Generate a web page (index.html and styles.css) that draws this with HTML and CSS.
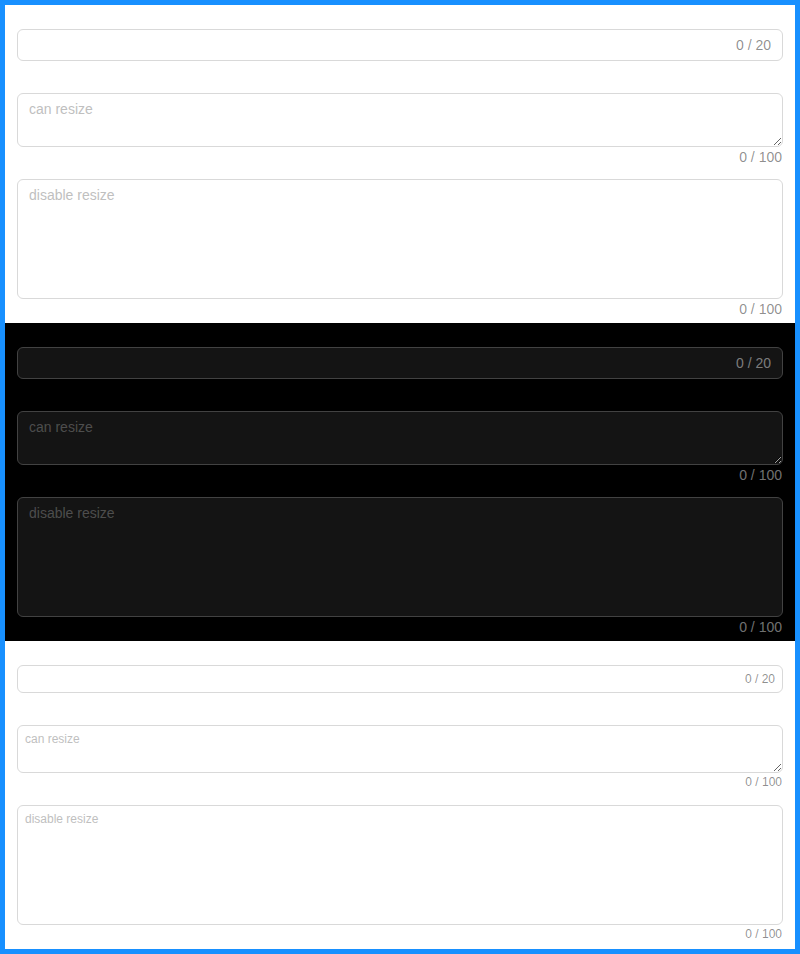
FILE: index.html
```html
<!DOCTYPE html>
<html>
<head>
<meta charset="utf-8">
<title>Input count</title>
<link rel="stylesheet" href="styles.css">
</head>
<body>
<div class="frame">
  <section class="panel light">
    <div class="field">
      <div class="affix">
        <span class="affix-box"></span>
        <span class="suffix">0 / 20</span>
      </div>
    </div>
    <div class="field">
      <textarea class="area area-resize" placeholder="can resize"></textarea>
      <span class="count">0 / 100</span>
    </div>
    <div class="field">
      <textarea class="area area-tall" placeholder="disable resize"></textarea>
      <span class="count">0 / 100</span>
    </div>
  </section>
  <section class="panel dark">
    <div class="field">
      <div class="affix">
        <span class="affix-box"></span>
        <span class="suffix">0 / 20</span>
      </div>
    </div>
    <div class="field">
      <textarea class="area area-resize" placeholder="can resize"></textarea>
      <span class="count">0 / 100</span>
    </div>
    <div class="field">
      <textarea class="area area-tall" placeholder="disable resize"></textarea>
      <span class="count">0 / 100</span>
    </div>
  </section>
  <section class="panel light small">
    <div class="field">
      <div class="affix">
        <span class="affix-box"></span>
        <span class="suffix">0 / 20</span>
      </div>
    </div>
    <div class="field">
      <textarea class="area area-resize" placeholder="can resize"></textarea>
      <span class="count">0 / 100</span>
    </div>
    <div class="field">
      <textarea class="area area-tall" placeholder="disable resize"></textarea>
      <span class="count">0 / 100</span>
    </div>
  </section>
</div>
</body>
</html>
```
FILE: styles.css
```css
* { box-sizing: border-box; }
html, body { margin: 0; padding: 0; }
body {
  font-family: "Liberation Sans", Arial, sans-serif;
  font-size: 14px;
  background: #1890ff;
}
.frame {
  border: 5px solid #1890ff;
  height: 954px;
  background: #fff;
  display: flex;
  flex-direction: column;
}
.panel {
  padding: 24px 12px;
  display: flex;
  flex-direction: column;
  gap: 32px;
}
.light { background: #fff; color: rgba(0,0,0,0.88); }
.dark { background: #000; color: rgba(255,255,255,0.85); color-scheme: dark; }
.field { position: relative; }
.affix {
  display: flex;
  align-items: center;
  height: 32px;
  border: 1px solid #d9d9d9;
  border-radius: 6px;
  padding: 0 11px;
  background: #fff;
}
.affix-box { flex: 1; }
.suffix { color: rgba(0,0,0,0.45); line-height: 22px; }
.area {
  display: block;
  width: 100%;
  margin: 0;
  border: 1px solid #d9d9d9;
  border-radius: 6px;
  padding: 4px 11px;
  font: inherit;
  line-height: 22px;
  background: #fff;
  color: rgba(0,0,0,0.88);
  outline: 0;
}
.area::placeholder { color: #bfbfbf; opacity: 1; }
.area-resize { height: 54px; resize: vertical; }
.area-tall { height: 120px; resize: none; }
.count {
  position: absolute;
  right: 1px;
  top: 100%;
  line-height: 20px;
  color: rgba(0,0,0,0.45);
  white-space: nowrap;
}
.dark .affix, .dark .area {
  background: #141414;
  border-color: #424242;
}
.dark .area { color: rgba(255,255,255,0.85); }
.dark .area::placeholder { color: rgba(255,255,255,0.25); }
.dark .suffix, .dark .count { color: rgba(255,255,255,0.45); }
.small { font-size: 12px; }
.small .affix { height: 28px; padding: 0 7px; }
.small .suffix { line-height: 20px; }
.small .area { padding: 4px 7px; line-height: 18px; }
.small .area-resize { height: 48px; }
.small .count { line-height: 19px; }
```
